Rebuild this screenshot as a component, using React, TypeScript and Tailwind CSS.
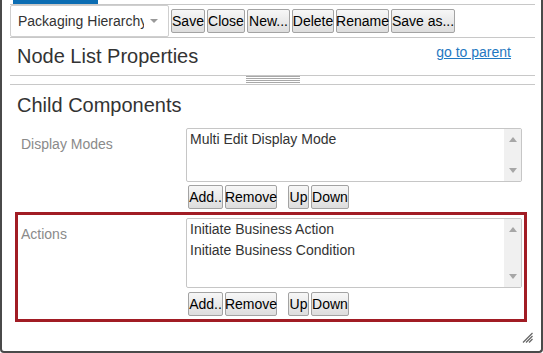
import type { ReactNode } from 'react'

const TOOLBAR_BUTTONS = [
  { label: 'Save', w: 'w-[34px]' },
  { label: 'Close', w: 'w-[38px]' },
  { label: 'New...', w: 'w-[43px]' },
  { label: 'Delete', w: 'w-[42px]' },
  { label: 'Rename', w: 'w-[53px]' },
  { label: 'Save as...', w: 'w-[64px]' },
]

function Btn({ children, w }: { children: ReactNode; w: string }) {
  return (
    <button
      className={`${w} h-[24px] shrink-0 flex items-center justify-center whitespace-nowrap px-0 border border-[#a3a3a3] rounded-[2px] bg-gradient-to-b from-[#f7f7f7] to-[#dddddd] text-[14px] leading-none text-black`}
    >
      {children}
    </button>
  )
}

function Arrow({ up }: { up?: boolean }) {
  return (
    <svg width="8" height="5" viewBox="0 0 8 5" className="block">
      {up ? <polygon points="0,5 8,5 4,0" fill="#a6a6a6" /> : <polygon points="0,0 8,0 4,5" fill="#a6a6a6" />}
    </svg>
  )
}

function ListBox({ items, h }: { items: string[]; h: string }) {
  return (
    <div className={`w-[336px] ${h} flex border border-[#c6c6c6] rounded-[2px] bg-white`}>
      <div className="flex-1 px-[3px] text-[14px] leading-[21px] text-[#333]">
        {items.map(i => (
          <div key={i}>{i}</div>
        ))}
      </div>
      <div className="w-[17px] bg-[#f0f0f0] flex flex-col items-center justify-between pt-[8px] pb-[8px]">
        <Arrow up />
        <Arrow />
      </div>
    </div>
  )
}

function ListButtons() {
  return (
    <div className="flex ml-[2px] gap-[2px]">
      <Btn w="w-[35px]">Add..</Btn>
      <Btn w="w-[52px]">Remove</Btn>
      <div className="w-[7px]" />
      <Btn w="w-[21px]">Up</Btn>
      <Btn w="w-[38px]">Down</Btn>
    </div>
  )
}

export default function App() {
  return (
    <div className="w-[543px] h-[353px] bg-white border-x-2 border-b-2 border-[#4a4a4a] rounded-b-[4px] pl-[8px] pr-[6px] overflow-hidden font-['Liberation_Sans',Arial,sans-serif]">
      {/* tab strip */}
      <div className="h-[5px] border-b border-[#c8c8c8]">
        <div className="ml-[3px] w-[85px] h-[4px] bg-[#0b6db3]" />
      </div>

      {/* toolbar */}
      <div className="h-[33px] border-b border-[#c8c8c8] flex items-center gap-[2px]">
        <div className="w-[159px] h-[32px] shrink-0 flex items-center border border-[#cfcfcf] rounded-[2px] bg-white">
          <div className="ml-[7px] w-[126px] overflow-hidden whitespace-nowrap text-[14px] leading-[16px] text-[#333]">
            Packaging Hierarchy
          </div>
          <div className="ml-[6px]">
            <svg width="8" height="4" viewBox="0 0 8 4" className="block">
              <polygon points="0,0 8,0 4,4" fill="#999" />
            </svg>
          </div>
        </div>
        {TOOLBAR_BUTTONS.map(b => (
          <Btn key={b.label} w={b.w}>
            {b.label}
          </Btn>
        ))}
      </div>

      {/* title */}
      <div className="h-[38px] border-b border-[#c8c8c8] flex items-start justify-between">
        <div className="ml-[7px] mt-[7px] text-[20px] leading-[23px] text-[#333]">Node List Properties</div>
        <a href="#" className="mr-[24px] mt-[6px] text-[14px] leading-[16px] text-[#1f78c1] underline">
          go to parent
        </a>
      </div>

      {/* splitter */}
      <div className="h-[9px] border-b border-[#c8c8c8] flex justify-center">
        <div className="w-[54px] flex flex-col gap-[1px]">
          <div className="h-px bg-[#a8a8a8]" />
          <div className="h-px bg-[#a8a8a8]" />
          <div className="h-px bg-[#a8a8a8]" />
          <div className="h-px bg-[#a8a8a8]" />
        </div>
      </div>

      <div className="mt-[9px] ml-[7px] text-[20px] leading-[23px] text-[#333]">Child Components</div>

      {/* display modes */}
      <div className="mt-[5px] ml-[5px] w-[512px] border-[3px] border-transparent pt-[3px] flex">
        <div className="w-[168px] pl-[3px] pt-[8px] text-[14px] leading-[16px] text-[#8a8a8a]">Display Modes</div>
        <div className="flex flex-col gap-[3px]">
          <ListBox items={['Multi Edit Display Mode']} h="h-[54px]" />
          <ListButtons />
        </div>
      </div>

      {/* actions (highlighted) */}
      <div className="ml-[5px] w-[512px] border-[3px] border-[#a11c24] pt-[3px] pb-[3px] flex">
        <div className="w-[168px] pl-[3px] pt-[8px] text-[14px] leading-[16px] text-[#8a8a8a]">Actions</div>
        <div className="flex flex-col gap-[4px]">
          <ListBox items={['Initiate Business Action', 'Initiate Business Condition']} h="h-[70px]" />
          <ListButtons />
        </div>
      </div>

      {/* resize grip */}
      <div className="mt-[10px] mr-[2px] flex justify-end">
        <svg width="11" height="11" viewBox="0 0 11 11" className="block">
          <line x1="1" y1="10.5" x2="10.5" y2="1" stroke="#666" strokeWidth="1.2" />
          <line x1="4" y1="10.5" x2="10.5" y2="4" stroke="#666" strokeWidth="1.2" />
          <line x1="7" y1="10.5" x2="10.5" y2="7" stroke="#666" strokeWidth="1.2" />
        </svg>
      </div>
    </div>
  )
}
